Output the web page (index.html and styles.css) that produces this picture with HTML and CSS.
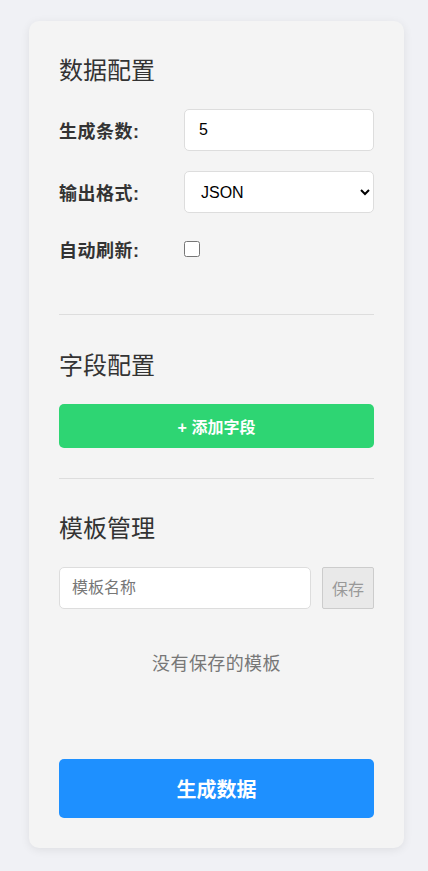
FILE: index.html
```html
<!DOCTYPE html>
<html lang="zh-CN">
<head>
<meta charset="utf-8">
<title>数据生成器</title>
<link rel="stylesheet" href="styles.css">
</head>
<body>
<div class="card">
  <section class="section">
    <h2 class="heading">数据配置</h2>
    <div class="row">
      <label class="label" for="count">生成条数:</label>
      <input class="field" id="count" type="number" value="5">
    </div>
    <div class="row">
      <label class="label" for="format">输出格式:</label>
      <select class="field select" id="format">
        <option>JSON</option>
        <option>CSV</option>
      </select>
    </div>
    <div class="row row-check">
      <label class="label" for="auto">自动刷新:</label>
      <input class="check" id="auto" type="checkbox">
    </div>
  </section>
  <section class="section fields">
    <h2 class="heading">字段配置</h2>
    <button class="btn-add" type="button">+ 添加字段</button>
  </section>
  <section class="section last">
    <h2 class="heading">模板管理</h2>
    <div class="tpl-row">
      <input class="field tpl-input" type="text" placeholder="模板名称">
      <button class="btn-save" type="button">保存</button>
    </div>
    <p class="empty">没有保存的模板</p>
  </section>
  <button class="btn-generate" type="button">生成数据</button>
</div>
</body>
</html>
```

FILE: styles.css
```css
* { box-sizing: border-box; }

body {
  margin: 0;
  padding: 21px 24px 23px 29px;
  background: #f0f1f5;
  font-family: "Liberation Sans", "Noto Sans CJK SC", sans-serif;
  color: #333;
}

.card {
  background: #f4f4f4;
  border-radius: 10px;
  box-shadow: 0 2px 10px rgba(0, 0, 0, 0.08);
  padding: 34px 30px 30px;
}

.section {
  padding-bottom: 30px;
  border-bottom: 1px solid #dddddd;
}

.section.fields {
  padding-top: 35px;
}

.section.last {
  border-bottom: none;
  padding-top: 34px;
  padding-bottom: 0;
}

.heading {
  margin: 0 0 22px;
  font-size: 24px;
  line-height: 32px;
  font-weight: 400;
  color: #333;
}

.row {
  display: flex;
  align-items: center;
  margin-bottom: 20px;
}

.row-check {
  min-height: 31px;
}

.label {
  width: 125px;
  flex: none;
  font-size: 18px;
  font-weight: 700;
  letter-spacing: 0.5px;
  color: #333;
}

.field {
  flex: 1;
  min-width: 0;
  height: 42px;
  border: 1px solid #dddddd;
  border-radius: 5px;
  background: #fff;
  padding: 0 14px;
  font-family: "Liberation Sans", "Noto Sans CJK SC", sans-serif;
  font-size: 16px;
  color: #000;
  outline: none;
}

.select {
  padding: 0 8px 0 12px;
}

.check {
  width: 16px;
  height: 16px;
  margin: 0;
}

.btn-add {
  display: block;
  width: 100%;
  height: 44px;
  border: none;
  border-radius: 5px;
  background: #2ed573;
  color: #fff;
  font-family: "Liberation Sans", "Noto Sans CJK SC", sans-serif;
  font-size: 16px;
  font-weight: 700;
}

.tpl-row {
  display: flex;
  gap: 11px;
}

.tpl-input {
  padding: 0 12px;
}

.tpl-input::placeholder {
  color: #777;
}

.btn-save {
  width: 52px;
  height: 42px;
  flex: none;
  border: 1px solid #cccccc;
  border-radius: 2px;
  background: #e9e9e9;
  color: #999;
  font-family: "Liberation Sans", "Noto Sans CJK SC", sans-serif;
  font-size: 16px;
  padding: 0;
}

.empty {
  margin: 0;
  padding: 42px 0 81px;
  text-align: center;
  font-size: 18px;
  letter-spacing: 0.4px;
  line-height: 27px;
  color: #777;
}

.btn-generate {
  display: block;
  width: 100%;
  height: 59px;
  border: none;
  border-radius: 5px;
  background: #1e90ff;
  color: #fff;
  font-family: "Liberation Sans", "Noto Sans CJK SC", sans-serif;
  font-size: 20px;
  font-weight: 700;
}
```
